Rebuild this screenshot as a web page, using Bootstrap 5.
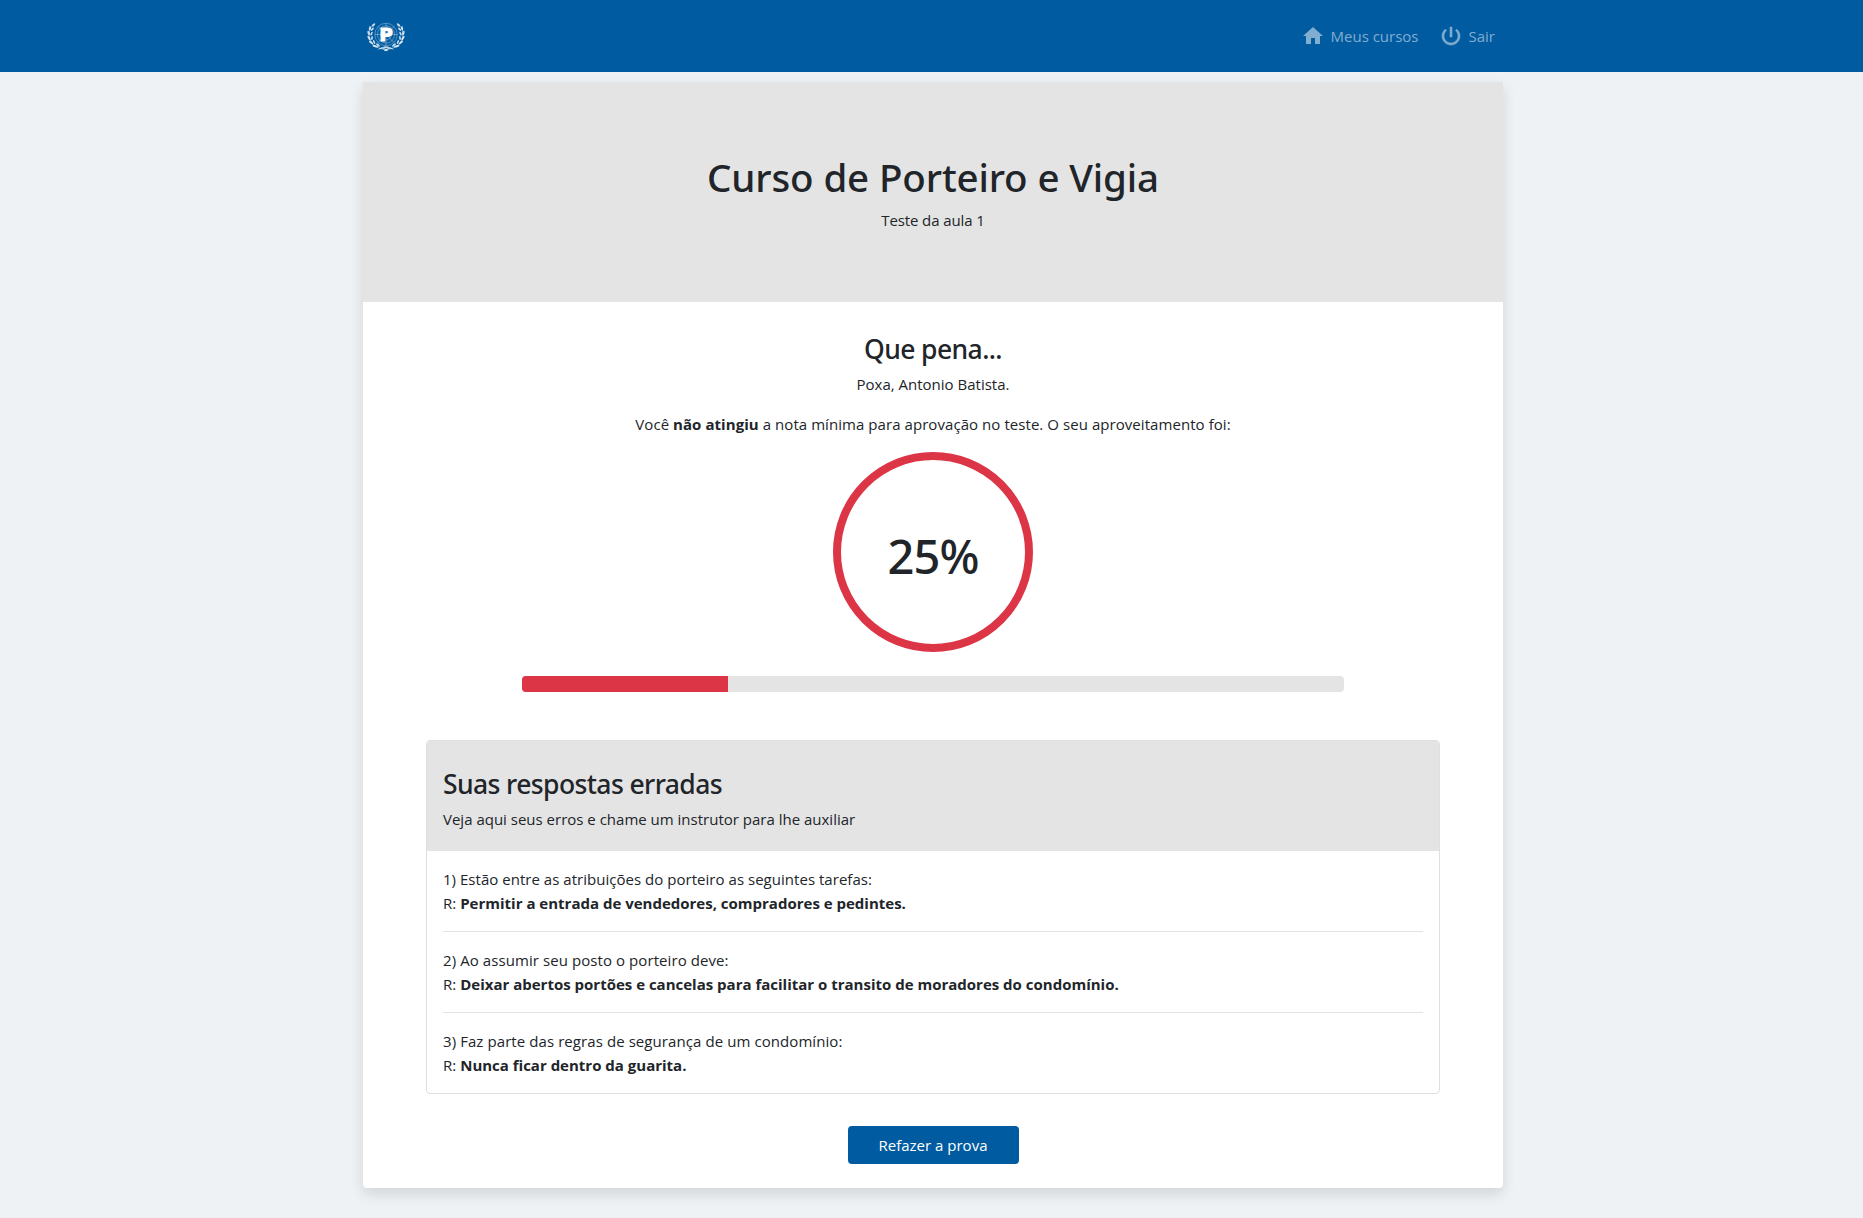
<!DOCTYPE html>
<html lang="pt-br">
<head>
<meta charset="utf-8">
<meta name="viewport" content="width=device-width, initial-scale=1">
<title>Curso de Porteiro e Vigia</title>
<link href="https://cdn.jsdelivr.net/npm/bootstrap@5.3.0/dist/css/bootstrap.min.css" rel="stylesheet">
<style>
  body { background: #eef2f5; min-height: 1218px; font-family: "Open Sans", "Noto Sans", sans-serif; font-size: 15px; line-height: 24px; color: #212529; }
  .page-box { width: 1140px; margin-left: calc((100% - 1137px) / 2); }
  .topbar { height: 72px; background: #005ba1; }
  .topbar .nav-link { color: #80add0; display: flex; align-items: center; padding: 0; }
  .topbar .nav-link span { margin-left: 6px; }
  .topbar .nav-link + .nav-link { margin-left: 20px; }
  .topbar svg { display: block; overflow: visible; }
  .menu { margin-right: 8px; }
  .logo-svg { margin: 3px 0 0 4px; }
  .result-card { margin-top: 10px; border: 0; border-radius: 0 0 4px 4px; box-shadow: 0 6px 14px rgba(0,0,0,.12); }
  h1, h2, .score strong { font-family: "Noto Sans", "Open Sans", sans-serif; font-weight: 500; }
  .hero { height: 220px; background: #e4e4e4; padding-top: 70px; }
  .hero h1 { font-size: 38.5px; line-height: 48px; letter-spacing: -.13px; padding-top: 1px; margin-bottom: 7px; }
  .hero p { letter-spacing: -.1px; }
  h2 { font-size: 26.5px; line-height: 33.6px; letter-spacing: -.6px; padding-top: 3px; margin-bottom: 5px; }
  .result-body { padding: 28px 63px 24px; }
  .notice { letter-spacing: .06px; }
  .score { width: 200px; height: 200px; border: 8px solid #dc3545; border-radius: 50%; }
  .score strong { font-size: 47px; line-height: 58px; letter-spacing: -.9px; padding-top: 8px; }
  .score-bar { width: 822px; height: 16px; border-radius: 4px; background: #e4e4e4; margin: 24px auto 48px; }
  .wrong { border: 1px solid #dfdfdf; border-radius: 4px; }
  .wrong-head { background: #e4e4e4; height: 110px; padding: 24.5px 16px 0; border-radius: 3px 3px 0 0; }
  .wrong-item { margin: 0 16px; padding: 16px 0; letter-spacing: .03px; }
  .wrong-item b { letter-spacing: 0; }
  .wrong-item + .wrong-item { border-top: 1px solid #e2e2e2; }
  .wrong-item.spaced > div:first-child { letter-spacing: .08px; }
  .btn-redo { --bs-btn-bg: #005ba1; --bs-btn-color: #fff; --bs-btn-hover-bg: #004b86; --bs-btn-hover-color: #fff; width: 171px; height: 38px; padding: 6px 0; font-size: 15px; line-height: 24px; border-radius: 4px; margin-top: 32px; }
</style>
<script src="https://cdn.jsdelivr.net/npm/bootstrap@5.3.0/dist/js/bootstrap.bundle.min.js"></script>
</head>
<body>
<nav class="topbar">
  <div class="page-box h-100 d-flex align-items-center justify-content-between">
    <a href="#" class="logo-svg" aria-label="Início">
      <svg width="38" height="32" viewBox="0 0 38 32">
        <defs>
          <g id="branch" fill="#fff" fill-opacity=".8">
            <path d="M6.500 1.800C.5 8 .8 18 7 23.300c3.600 3 8 3.200 12 5.200" fill="none" stroke="#fff" stroke-opacity=".5" stroke-width=".8"/>
            <ellipse cx="6.600" cy="3" rx="2.100" ry=".9" transform="rotate(-45 6.600 3)"/>
            <ellipse cx="2.900" cy="6.300" rx="2.200" ry="1" transform="rotate(-80 2.900 6.300)"/>
            <ellipse cx="5.400" cy="7.200" rx="2" ry=".9" transform="rotate(-50 5.400 7.200)"/>
            <ellipse cx="1.600" cy="11" rx="2.400" ry="1.100" transform="rotate(75 1.600 11)"/>
            <ellipse cx="4.500" cy="11.600" rx="2.100" ry=".9" transform="rotate(-65 4.500 11.600)"/>
            <ellipse cx="2" cy="16" rx="2.500" ry="1.100" transform="rotate(60 2 16)"/>
            <ellipse cx="5" cy="16" rx="2.100" ry=".9" transform="rotate(-85 5 16)"/>
            <ellipse cx="4.100" cy="20.500" rx="2.600" ry="1.100" transform="rotate(38 4.100 20.500)"/>
            <ellipse cx="7.100" cy="20" rx="2.200" ry=".9" transform="rotate(68 7.100 20)"/>
            <ellipse cx="8.300" cy="24.200" rx="2.900" ry="1.100" transform="rotate(15 8.300 24.200)"/>
            <ellipse cx="11" cy="23" rx="2.300" ry=".9" transform="rotate(42 11 23)"/>
            <path d="M10.500 27.600c3-2 6-2.400 9.300-3l2.200-.2c-3.500 1.600-7 2-11.500 3.200z"/>
            <path d="M13 25.200c3 .1 5.500 1.200 8 3.200l-1 .8c-2-2-4-3-7-4z"/>
          </g>
        </defs>
        <g fill="none" stroke="#fff" stroke-opacity=".45" stroke-width=".7">
          <circle cx="19" cy="12.500" r="11.200"/>
          <circle cx="19" cy="12.500" r="8.600"/>
          <circle cx="19" cy="12.500" r="5.500"/>
          <path d="M7.800 12.500h22.400M19 1.300v22.400M11.100 4.600l15.800 15.800M26.900 4.600 11.100 20.400"/>
        </g>
        <use href="#branch"/>
        <use href="#branch" transform="matrix(-1 0 0 1 38 0)"/>
        <text x="19" y="18.900" text-anchor="middle" font-family="DejaVu Sans" font-weight="700" font-size="18" fill="#fff" stroke="#fff" stroke-width="1.200">P</text>
      </svg>
    </a>
    <div class="menu d-flex">
      <a class="nav-link" href="#">
        <svg width="24" height="24" viewBox="0 0 24 24" fill="currentColor"><path d="M10 20v-6h4v6h5v-8h3L12 3 2 12h3v8z"/></svg>
        <span>Meus cursos</span>
      </a>
      <a class="nav-link" href="#">
        <svg width="24" height="24" viewBox="0 0 24 24" fill="currentColor" stroke="currentColor" stroke-width=".6"><path d="M13 3h-2v10h2V3zm4.830 2.170l-1.420 1.420C17.990 7.860 19 9.810 19 12c0 3.870-3.130 7-7 7s-7-3.130-7-7c0-2.190 1.010-4.140 2.580-5.420L6.170 5.170C4.230 6.820 3 9.260 3 12c0 4.970 4.030 9 9 9s9-4.030 9-9c0-2.740-1.230-5.180-3.170-6.830z"/></svg>
        <span>Sair</span>
      </a>
    </div>
  </div>
</nav>

<main class="card result-card page-box">
  <header class="hero text-center">
    <h1>Curso de Porteiro e Vigia</h1>
    <p class="mb-0">Teste da aula 1</p>
  </header>
  <div class="result-body">
    <section class="text-center">
      <h2>Que pena...</h2>
      <p class="mb-3">Poxa, Antonio Batista.</p>
      <p class="mb-3 notice">Você <b>não atingiu</b> a nota mínima para aprovação no teste. O seu aproveitamento foi:</p>
      <div class="score d-flex align-items-center justify-content-center mx-auto"><strong>25%</strong></div>
      <div class="progress score-bar"><div class="progress-bar bg-danger" style="width:25%"></div></div>
    </section>
    <section class="wrong">
      <header class="wrong-head">
        <h2>Suas respostas erradas</h2>
        <p class="mb-0">Veja aqui seus erros e chame um instrutor para lhe auxiliar</p>
      </header>
      <div class="wrong-item">
        <div>1) Estão entre as atribuições do porteiro as seguintes tarefas:</div>
        <div>R: <b>Permitir a entrada de vendedores, compradores e pedintes.</b></div>
      </div>
      <div class="wrong-item spaced">
        <div>2) Ao assumir seu posto o porteiro deve:</div>
        <div>R: <b>Deixar abertos portões e cancelas para facilitar o transito de moradores do condomínio.</b></div>
      </div>
      <div class="wrong-item spaced">
        <div>3) Faz parte das regras de segurança de um condomínio:</div>
        <div>R: <b>Nunca ficar dentro da guarita.</b></div>
      </div>
    </section>
    <div class="text-center"><button type="button" class="btn btn-redo">Refazer a prova</button></div>
  </div>
</main>
</body>
</html>
